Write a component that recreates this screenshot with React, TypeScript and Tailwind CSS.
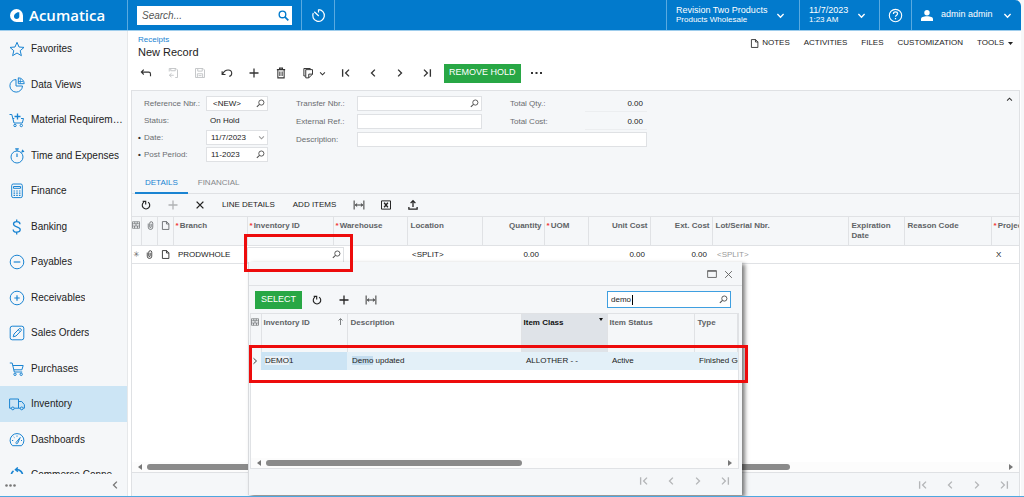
import * as React from "react";

type IconProps = { className?: string; children?: React.ReactNode };

const Icon = ({ className = "size-4", children }: IconProps) => (
    <svg
        className={`shrink-0 ${className}`}
        viewBox="0 0 16 16"
        fill="none"
        stroke="currentColor"
        strokeWidth="1"
        aria-hidden="true"
    >
        {children}
    </svg>
);

const Lens = ({ className = "size-[9px] text-[#4c4c4c]" }: IconProps) => (
    <Icon className={className}>
        <circle cx="9.5" cy="6.3" r="4.6" strokeWidth="1.6" />
        <path d="M6.2 9.6 1.5 14" strokeWidth="1.8" />
    </Icon>
);

const Chevron = ({ className = "size-3" }: IconProps) => (
    <Icon className={className}>
        <path d="M2.5 5.5 8 11l5.5-5.5" strokeWidth="2.4" />
    </Icon>
);

const Refresh = () => (
    <Icon className="size-3">
        <path d="M5.2 4.2a5 5 0 1 0 5.6 0" strokeWidth="1.5" />
        <path d="M3.6 3.2h4v4" strokeWidth="1.5" />
    </Icon>
);

const Plus = () => (
    <Icon className="size-3">
        <path d="M8 2v12M2 8h12" strokeWidth="1.7" />
    </Icon>
);

const FitWidth = () => (
    <Icon className="size-3">
        <path d="M1.5 2v12M14.5 2v12M3 8h10" strokeWidth="1.2" />
        <path d="M5.5 6 3.2 8l2.3 2M10.5 6l2.3 2-2.3 2" strokeWidth="1.2" />
    </Icon>
);

const First = () => (
    <Icon className="size-3">
        <path d="M3.5 3v10M12 3.5 7.5 8l4.5 4.5" strokeWidth="1.8" />
    </Icon>
);

const Prev = () => (
    <Icon className="size-3">
        <path d="M10.5 3.5 6 8l4.5 4.5" strokeWidth="1.8" />
    </Icon>
);

const Next = () => (
    <Icon className="size-3">
        <path d="M5.5 3.5 10 8l-4.5 4.5" strokeWidth="1.8" />
    </Icon>
);

const Last = () => (
    <Icon className="size-3">
        <path d="M12.5 3v10M4 3.5 8.5 8 4 12.5" strokeWidth="1.8" />
    </Icon>
);

const Clip = ({ className = "size-[9px]" }: IconProps) => (
    <Icon className={className}>
        <path d="M4 4.5v6.5a4 4 0 0 0 8 0V4a2.7 2.7 0 0 0-5.4 0v6.5a1.3 1.3 0 0 0 2.6 0V5" strokeWidth="1.4" />
    </Icon>
);

const Page = ({ className = "size-[9px]" }: IconProps) => (
    <Icon className={className}>
        <path d="M2.5 1h7.5l4 4v10H2.5zM9.7 1v4.3H14" strokeWidth="1.5" />
    </Icon>
);

const GridMark = () => (
    <Icon className="size-2">
        <path d="M1 1.5h14v13H1zM1 5.5h14M1 10h14M5.5 1.5v4M10.5 1.5v4M8 5.5V10M5 10v4.5M11 10v4.5" strokeWidth="1.3" />
    </Icon>
);

const menu = [
    { name: "Favorites", icon: <path d="m8 1.3 2 4.7 5 .4-3.8 3.3 1.2 5L8 12l-4.4 2.7 1.2-5L1 6.4 6 6z" /> },
    {
        name: "Data Views",
        icon: (
            <>
                <path d="M7 2.5A6.3 6.3 0 1 0 13.5 9H7z" />
                <path d="M9.3.8v5.9h5.9A6 6 0 0 0 9.3.8z" />
                <path d="M11.3 1.5v5M9.3 4.5h5" strokeWidth=".8" />
            </>
        ),
    },
    {
        name: "Material Requirements Planning",
        icon: (
            <>
                <path d="M.5 2.5h2.3L5 11h8.3M3.8 6.5h1.5M12 6.5h2.5L13.3 11" />
                <path d="M8.5 1.5v6M5.5 4.5h6" strokeWidth="1.3" />
                <circle cx="6" cy="13.5" r="1.2" />
                <circle cx="12.3" cy="13.5" r="1.2" />
            </>
        ),
    },
    {
        name: "Time and Expenses",
        icon: (
            <>
                <circle cx="8" cy="9" r="6" />
                <path d="M8 5.5V9M6.2.9h3.6M8 1v2M12.5 4.5 14 2.9M13 1.9l2 2" strokeWidth="1.2" />
            </>
        ),
    },
    {
        name: "Finance",
        icon: (
            <>
                <rect x="2.7" y="1" width="10.6" height="13.6" rx="1.5" />
                <path d="M4.5 3.5h7v1.8h-7z" />
                <path d="M4.5 8h1.6M7.2 8h1.6M9.9 8h1.6M4.5 10.2h1.6M7.2 10.2h1.6M9.9 10.2h1.6M4.5 12.4h1.6M7.2 12.4h1.6M9.9 12.4h1.6" strokeWidth="1.2" />
            </>
        ),
    },
    {
        name: "Banking",
        icon: (
            <path d="M11 5.2C11 3.6 9.6 2.7 7.7 2.7S4.5 3.7 4.5 5.1c0 3.5 6.7 1.9 6.7 5.5 0 1.5-1.5 2.6-3.5 2.6s-3.5-1-3.5-2.7M7.7.6v2.2M7.7 13.2v2.3" strokeWidth="1.3" />
        ),
    },
    {
        name: "Payables",
        icon: (
            <>
                <circle cx="8" cy="8" r="6.8" />
                <path d="M4.7 8h6.6" strokeWidth="1.2" />
            </>
        ),
    },
    {
        name: "Receivables",
        icon: (
            <>
                <circle cx="8" cy="8" r="6.8" />
                <path d="M5.3 8h5.4M8 5.3v5.4" strokeWidth="1.2" />
            </>
        ),
    },
    {
        name: "Sales Orders",
        icon: (
            <>
                <rect x="1.2" y="1.2" width="13.6" height="13.6" rx="2" />
                <path d="m4.2 11.8.8-2.8 5.3-5.3c.9-.9 2.7.9 1.9 1.9L7 11zM9.3 4.8l1.9 1.9" />
            </>
        ),
    },
    {
        name: "Purchases",
        icon: (
            <>
                <path d="M.8 2h2.4l2.1 9h7.9M3.9 4.5h10.3l-1.3 4.3h-8" />
                <circle cx="6" cy="13.3" r="1.2" />
                <circle cx="12.2" cy="13.3" r="1.2" />
            </>
        ),
    },
    {
        name: "Inventory",
        active: true,
        icon: (
            <>
                <path d="M2.3 12.2H.6V3h8.9v9.2H5.3M9.5 5.5h3.2l2.7 3.2v3.5h-1.3M9.5 12.2h1.7" />
                <circle cx="3.8" cy="12.4" r="1.4" />
                <circle cx="12.7" cy="12.4" r="1.4" />
            </>
        ),
    },
    {
        name: "Dashboards",
        icon: (
            <>
                <path d="M3.5 13.7a6.9 6.9 0 1 1 9 0z" />
                <path d="M3 8.5h1.2M4.7 4.9l.8.8M8 3.5v1.2M12 8.5h1" />
                <path d="m7 10.5 4.2-5-2.6 5.8c-.7 1-2 .2-1.6-.8z" />
            </>
        ),
    },
    {
        name: "Commerce Connections",
        icon: (
            <>
                <path d="M4.5 3.8A6 6 0 0 0 2.5 10M7 2.5a6 6 0 0 1 6.5 7" strokeWidth="1.6" />
                <path d="M8.8.5 6.5 2.7l2.5 2" strokeWidth="1.5" />
            </>
        ),
    },
];

const ToolButton = ({
    label,
    className = "w-[27px]",
    children,
}: IconProps & { label: string }) => (
    <button
        type="button"
        aria-label={label}
        className={`flex h-5 shrink-0 items-center justify-center ${className}`}
    >
        {children}
    </button>
);

const Pager = () => (
    <div className="flex text-[#b4b6b8]">
        <ToolButton label="First page"><First /></ToolButton>
        <ToolButton label="Previous page"><Prev /></ToolButton>
        <ToolButton label="Next page"><Next /></ToolButton>
        <ToolButton label="Last page"><Last /></ToolButton>
    </div>
);

const ScrollBar = ({ thumb }: { thumb: string }) => (
    <div className="flex h-[10px] shrink-0 items-center gap-[5px] bg-[#fcfcfc] px-[6px] text-[#777]">
        <svg className="h-[6px] w-1 shrink-0" viewBox="0 0 4 6" fill="currentColor">
            <path d="M4 0v6L0 3z" />
        </svg>
        <div className="flex-1">
            <div className={`h-[6px] rounded-full bg-[#8a8a8a] ${thumb}`} />
        </div>
        <svg className="h-[6px] w-1 shrink-0" viewBox="0 0 4 6" fill="currentColor">
            <path d="M0 0v6l4-3z" />
        </svg>
    </div>
);

const Header = () => (
    <header className="mr-[3px] flex h-[31px] shrink-0 rounded-tr-md border-b border-[#9fcdec] bg-[#027acc] text-white">
        <div className="flex w-32 shrink-0 items-center gap-[6px] border-r border-[#5aaae0] pl-[10px]">
            <svg className="size-[13px]" viewBox="0 0 13 13" fill="white" fillRule="evenodd">
                <path d="M6.5 0A6.5 6.5 0 0 1 13 6.5V13H6.5a6.5 6.5 0 0 1 0-13zM7.5 3.2C5 4.3 3.8 6 4 7.8 4.200 9.200 5.400 10 6.700 10 8.300 10 9.300 9 9.300 7.500V3.300z" />
            </svg>
            <span className="font-['Open_Sans',sans-serif] text-[15px] leading-5 font-semibold">
                Acumatica
            </span>
        </div>
        <div className="flex w-[174px] items-center border-r border-[#5aaae0] px-[9px]">
            <label className="flex h-[19px] w-full items-center bg-white pr-[3px]">
                <input
                    aria-label="Search"
                    placeholder="Search..."
                    className="min-w-0 flex-1 px-[5px] text-[10px] text-black italic outline-none placeholder:text-[#555]"
                />
                <Icon className="size-[11px] text-[#027acc]">
                    <circle cx="6.5" cy="6.5" r="4.8" strokeWidth="2" />
                    <path d="m10 10 5 5" strokeWidth="2.5" />
                </Icon>
            </label>
        </div>
        <button type="button" aria-label="Business date" className="flex w-[33px] items-center justify-center border-r border-[#5aaae0]">
            <Icon className="size-[15px]">
                <path d="M8 1.8a6.2 6.2 0 1 1-5.6 3.6M8 1.5v3.2M3.5 4l4.8 4.5" strokeWidth="1.3" />
            </Icon>
        </button>
        <div className="flex-1" />
        <button type="button" className="flex w-[133px] items-center justify-between border-l border-[#5aaae0] pr-[14px] pl-[9px] text-left">
            <span className="text-[9px] leading-[10px]">
                Revision Two Products
                <span className="block text-[8px]">Products Wholesale</span>
            </span>
            <Chevron className="size-[9px]" />
        </button>
        <button type="button" className="flex w-20 items-center justify-between border-l border-[#5aaae0] pr-[13px] pl-[9px] text-left">
            <span className="text-[9px] leading-[10px]">
                11/7/2023
                <span className="block text-[8px]">1:23 AM</span>
            </span>
            <Chevron className="size-[9px]" />
        </button>
        <button type="button" aria-label="Help" className="flex w-8 items-center justify-center border-l border-[#5aaae0]">
            <Icon className="size-[15px]">
                <circle cx="8" cy="8" r="6.6" strokeWidth="1.2" />
                <path d="M5.8 6.3C5.8 5 6.7 4.2 8 4.2s2.2.8 2.2 2c0 1.5-2.2 1.6-2.2 3.2M8 10.7v1.4" strokeWidth="1.3" />
            </Icon>
        </button>
        <button type="button" className="flex w-[110px] items-center border-l border-[#5aaae0] px-[9px] text-[9px]">
            <svg className="mr-2 h-[11px] w-3" viewBox="0 0 12 11" fill="currentColor">
                <circle cx="6" cy="2.7" r="2.7" />
                <path d="M0 11V9c0-1.8 2.5-2.8 6-2.8s6 1 6 2.8v2z" />
            </svg>
            <span className="flex-1 text-left">admin admin</span>
            <Chevron className="size-[9px]" />
        </button>
    </header>
);

const Sidebar = () => (
    <nav className="flex w-32 shrink-0 flex-col border-r border-[#e6e8ea] bg-[#f5f7f9]">
        <ul className="min-h-0 flex-1 overflow-hidden">
            {menu.map((item) => (
                <li key={item.name} className="odd:h-9 even:h-[35px]">
                    <a
                        href="#"
                        className={`flex h-full items-center gap-[6px] pr-[2px] pl-[9px] text-[10px] leading-4 text-[#222] ${
                            item.active ? "bg-[#cce5f5]" : ""
                        }`}
                    >
                        <Icon className="size-4 text-[#1a84d2]">{item.icon}</Icon>
                        <span className="truncate">{item.name}</span>
                    </a>
                </li>
            ))}
        </ul>
        <div className="flex h-[22px] shrink-0 items-center justify-between pr-[6px] pl-[5px] text-[#777]">
            <button type="button" aria-label="More">
                <svg className="h-[3px] w-[11px]" viewBox="0 0 11 3" fill="currentColor">
                    <circle cx="1.5" cy="1.5" r="1.3" />
                    <circle cx="5.5" cy="1.5" r="1.3" />
                    <circle cx="9.5" cy="1.5" r="1.3" />
                </svg>
            </button>
            <button type="button" aria-label="Collapse menu"><Prev /></button>
        </div>
    </nav>
);

const MainToolbar = () => (
    <div className="mt-1 flex h-5 items-center pl-px text-[#333]">
        <ToolButton label="Back">
            <Icon className="size-3">
                <path d="M5 3.5 1.8 6.8 5 10M2 6.8h9.5q2.5 0 2.5 2.5v3" strokeWidth="1.5" />
            </Icon>
        </ToolButton>
        <ToolButton label="Save and close">
            <Icon className="size-3 text-[#c4c6c8]">
                <path d="M3 6V2h9l2 2v10h-3M5 2v3h6V2M6 8.5 3 11l3 2.5M3.5 11H9" strokeWidth="1.3" />
            </Icon>
        </ToolButton>
        <ToolButton label="Save">
            <Icon className="size-3 text-[#c4c6c8]">
                <path d="M2 2h10l2 2v10H2zM5 2v3.5h6V2M4.5 14V9h7v5M6 11.5h4" strokeWidth="1.3" />
            </Icon>
        </ToolButton>
        <ToolButton label="Undo">
            <Icon className="size-3">
                <path d="M1.5 5.5V10H6M2 9.500C4 5.500 7 4 9.500 4c3 0 4.800 2 4.800 4.300 0 2-1.300 3.700-3.300 4.200" strokeWidth="1.5" />
            </Icon>
        </ToolButton>
        <ToolButton label="Add"><Plus /></ToolButton>
        <ToolButton label="Delete">
            <Icon className="size-3">
                <path d="M2.5 3.5h11M6 3.5v-2h4v2M3.8 3.5v11h8.4v-11M6.5 6v6M9.5 6v6" strokeWidth="1.4" />
            </Icon>
        </ToolButton>
        <ToolButton label="Copy and paste" className="w-[38px] gap-[5px] pl-[2px]">
            <Icon className="size-3">
                <path d="M4.5 12h-2V2H11v1.500M9 14.500H5v-11h9v6zM9 14.500v-5h5" strokeWidth="1.3" />
            </Icon>
            <Chevron className="size-[7px]" />
        </ToolButton>
        <ToolButton label="First record"><First /></ToolButton>
        <ToolButton label="Previous record"><Prev /></ToolButton>
        <ToolButton label="Next record"><Next /></ToolButton>
        <ToolButton label="Last record"><Last /></ToolButton>
        <button type="button" className="ml-1 h-[19px] bg-[#28a745] px-[5px] text-[9px] text-white">
            REMOVE HOLD
        </button>
        <ToolButton label="More actions" className="w-8">
            <svg className="h-[2px] w-[11px]" viewBox="0 0 11 2" fill="currentColor">
                <path d="M0 0h2v2H0zM4.5 0h2v2h-2zM9 0h2v2H9z" />
            </svg>
        </ToolButton>
    </div>
);

const box = "flex h-[15px] items-center border border-[#dfe1e4] bg-white pr-[2px] pl-1";
const entry = "min-w-0 flex-1 bg-transparent text-[8px] leading-3 text-[#222] outline-none";

const Summary = () => (
    <form className="flex items-start pt-[5px] pr-[6px] pb-2 text-[8px] leading-[15px] text-[#6a6d70]">
        <div className="grid grid-cols-[12px_62px_62px] gap-y-[2px]">
            <label htmlFor="ref" className="col-start-2">Reference Nbr.:</label>
            <span className={box}>
                <input id="ref" defaultValue="<NEW>" className={`${entry} pl-[2px]`} />
                <Lens />
            </span>
            <span className="col-start-2">Status:</span>
            <span className="pl-1 text-[#222]">On Hold</span>
            <span className="pl-[6px] font-bold text-[#333]">•</span>
            <label htmlFor="date">Date:</label>
            <span className={box}>
                <input id="date" defaultValue="11/7/2023" className={entry} />
                <Chevron className="size-[7px] text-[#999]" />
            </span>
            <span className="pl-[6px] font-bold text-[#333]">•</span>
            <label htmlFor="period">Post Period:</label>
            <span className={box}>
                <input id="period" defaultValue="11-2023" className={entry} />
                <Lens />
            </span>
        </div>
        <div className="ml-7 grid grid-cols-[61px_125px_28px_75px_62px] gap-y-[2px]">
            <label htmlFor="transfer">Transfer Nbr.:</label>
            <span className={box}>
                <input id="transfer" className={entry} />
                <Lens />
            </span>
            <span className="col-start-4">Total Qty.:</span>
            <span className="border-b border-[#eceef0] pr-1 text-right text-[#222]">0.00</span>
            <label htmlFor="external">External Ref.:</label>
            <span className={box}>
                <input id="external" className={entry} />
            </span>
            <span className="col-start-4">Total Cost:</span>
            <span className="border-b border-[#eceef0] pr-1 text-right text-[#222]">0.00</span>
            <label htmlFor="description">Description:</label>
            <span className={`col-span-4 ${box}`}>
                <input id="description" className={entry} />
            </span>
        </div>
        <button type="button" aria-label="Collapse summary" className="ml-auto rotate-180">
            <Chevron className="size-[7px] text-[#333]" />
        </button>
    </form>
);

const GridToolbar = () => (
    <div className="flex h-[22px] shrink-0 items-center text-[8px] text-[#222]">
        <ToolButton label="Refresh"><Refresh /></ToolButton>
        <ToolButton label="Add row" className="w-[27px] text-[#b0b2b4]"><Plus /></ToolButton>
        <ToolButton label="Delete row">
            <Icon className="size-3">
                <path d="m3.5 3.5 9 9M12.5 3.5l-9 9" strokeWidth="1.8" />
            </Icon>
        </ToolButton>
        <button type="button" className="px-[9px]">LINE DETAILS</button>
        <button type="button" className="px-[9px]">ADD ITEMS</button>
        <ToolButton label="Fit to screen"><FitWidth /></ToolButton>
        <ToolButton label="Export to Excel">
            <Icon className="size-3">
                <path d="M2 2.5h12v11H2z" strokeWidth="1.3" />
                <path d="m5.5 5 5 6M10.5 5l-5 6" strokeWidth="1.8" />
            </Icon>
        </ToolButton>
        <ToolButton label="Load records">
            <Icon className="size-3">
                <path d="M8 10.500v-8M4.800 5.500 8 2.200l3.200 3.300M2.500 10.500v3h11v-3" strokeWidth="1.7" />
            </Icon>
        </ToolButton>
    </div>
);

const columns = [
    { name: "Branch", width: "w-[74px]", required: true, value: "PRODWHOLE" },
    { name: "Inventory ID", width: "w-[86px]", required: true, value: "" },
    { name: "Warehouse", width: "w-[74px]", required: true, value: "" },
    { name: "Location", width: "w-[75px]", value: "<SPLIT>" },
    { name: "Quantity", width: "w-[62px]", right: true, value: "0.00" },
    { name: "UOM", width: "w-[44px]", required: true, value: "" },
    { name: "Unit Cost", width: "w-[62px]", right: true, value: "0.00" },
    { name: "Ext. Cost", width: "w-[62px]", right: true, value: "0.00" },
    { name: "Lot/Serial Nbr.", width: "w-[136px]", muted: true, value: "<SPLIT>" },
    { name: "Expiration Date", width: "w-[56px]", value: "" },
    { name: "Reason Code", width: "w-[87px]", value: "" },
    { name: "Project", width: "", required: true, value: "X" },
];

const DetailsGrid = () => (
    <table className="w-full table-fixed border-collapse text-[8px]">
        <thead>
            <tr className="h-[29px] border-y border-[#e0e2e5] bg-[#f5f7f9] align-top leading-[10px] text-[#606366]">
                <th className="w-[9px] border-r border-[#e0e2e5] pt-1"><GridMark /></th>
                <th className="w-4 border-r border-[#e0e2e5] pt-1 pl-1"><Clip /></th>
                <th className="w-4 border-r border-[#e0e2e5] pt-1 pl-[3px]"><Page /></th>
                {columns.map((c) => (
                    <th
                        key={c.name}
                        className={`overflow-hidden border-r border-[#e0e2e5] pt-1 font-bold last:border-r-0 ${c.width} ${
                            c.right ? "pr-[2px] text-right" : "text-left"
                        } ${c.required ? "pl-[2px] whitespace-nowrap" : "pl-[3px]"}`}
                    >
                        {c.required && <span className="mr-px text-[#f03434]">*</span>}
                        {c.name}
                    </th>
                ))}
            </tr>
        </thead>
        <tbody>
            <tr className="h-[18px] border-b border-[#e0e2e5] bg-white text-[#222]">
                <td className="text-center text-[#666]">✳</td>
                <td className="pl-1"><Clip /></td>
                <td className="pl-1"><Page /></td>
                {columns.map((c) =>
                    c.name === "Inventory ID" ? (
                        <td key={c.name}>
                            {/* the cell editor is wider than its column */}
                            <span className="flex h-4 w-[97px] items-center border border-[#dfe1e4] bg-white pr-[2px]">
                                <input aria-label="Inventory ID" className={entry} />
                                <Lens />
                            </span>
                        </td>
                    ) : (
                        <td
                            key={c.name}
                            className={`whitespace-nowrap ${c.right ? "pr-[5px] text-right" : "pl-[5px]"} ${
                                c.muted ? "text-[#999]" : ""
                            }`}
                        >
                            {c.value}
                        </td>
                    )
                )}
            </tr>
        </tbody>
    </table>
);

const Lookup = () => (
    <div
        role="dialog"
        aria-label="Select inventory item"
        className="absolute top-[262px] left-[248px] flex h-[233px] w-[494px] flex-col border-l border-[#d8dadd] bg-[#f5f7f9] shadow-[3px_2px_4px_rgba(0,0,0,0.5)]"
    >
        <div className="flex h-6 shrink-0 items-center justify-end gap-[7px] border-b border-[#e0e2e5] pt-px pr-[9px] text-[#666]">
            <button type="button" aria-label="Maximize">
                <Icon className="size-[10px]">
                    <path d="M1 2.5h14v11H1zM1 3.700h14" strokeWidth="1.5" />
                </Icon>
            </button>
            <button type="button" aria-label="Close">
                <Icon className="size-[9px]">
                    <path d="m2 2 12 12M14 2 2 14" strokeWidth="1.7" />
                </Icon>
            </button>
        </div>
        <div className="flex h-[27px] shrink-0 items-center pr-[11px] pl-[6px] text-[#222]">
            <button type="button" className="mr-px h-[18px] bg-[#28a745] px-[6px] text-[9px] text-white">
                SELECT
            </button>
            <ToolButton label="Refresh"><Refresh /></ToolButton>
            <ToolButton label="Add"><Plus /></ToolButton>
            <ToolButton label="Fit to screen"><FitWidth /></ToolButton>
            <label className="relative ml-auto flex h-[17px] w-[124px] items-center border border-[#3f9fe0] bg-white px-[2px]">
                <input aria-label="Search items" defaultValue="demo" className={`${entry} pl-px`} />
                <span className="absolute top-[3px] left-6 h-[10px] w-px bg-black" />
                <Lens />
            </label>
        </div>
        <div className="mr-[3px] ml-px flex min-h-0 flex-1 flex-col border border-[#e0e2e5] bg-white">
            <table className="w-full table-fixed border-collapse text-left text-[8px]">
                <thead>
                    <tr className="h-[38px] bg-[#f5f7f9] align-top leading-[10px] text-[#606366] *:border-r *:border-[#e0e2e5] *:pt-1">
                        <th className="w-[10px]"><GridMark /></th>
                        <th className="w-[86px] pl-[2px]">
                            <span className="flex justify-between pr-1">
                                Inventory ID
                                <svg className="h-[7px] w-[5px]" viewBox="0 0 5 7" fill="none" stroke="currentColor">
                                    <path d="M2.5 7V1M.5 2.500l2-2 2 2" strokeWidth=".8" />
                                </svg>
                            </span>
                        </th>
                        <th className="w-[174px] pl-[3px]">Description</th>
                        <th className="w-[86px] bg-[#dfe3e8] pl-[2px] text-[#111]">
                            <span className="flex justify-between pr-1">
                                Item Class
                                <svg className="h-[3px] w-1" viewBox="0 0 4 3" fill="currentColor">
                                    <path d="M0 0h4L2 3z" />
                                </svg>
                            </span>
                        </th>
                        <th className="w-[87px] pl-[2px]">Item Status</th>
                        <th className="pl-[3px]">Type</th>
                    </tr>
                </thead>
                <tbody>
                    <tr className="h-[18px] bg-[#e3f0f8] whitespace-nowrap text-[#222]">
                        <td className="bg-[#f5f7f9]">
                            <Icon className="size-2">
                                <path d="m5 2.500 6 5.500-6 5.500" strokeWidth="1.7" />
                            </Icon>
                        </td>
                        <td className="bg-[#cce4f4] pl-1">
                            <span className="bg-[#e9f1f7]">DEMO</span>1
                        </td>
                        <td className="pl-[5px]">
                            <span className="bg-[#c3dcee]">Demo</span> updated
                        </td>
                        <td className="pl-[5px]">ALLOTHER - -</td>
                        <td className="pl-[5px]">Active</td>
                        <td className="overflow-hidden pl-[5px]">Finished Good</td>
                    </tr>
                </tbody>
            </table>
            <div className="flex-1" />
            <ScrollBar thumb="w-[56%]" />
        </div>
        <div className="flex h-[26px] shrink-0 items-center justify-end pr-1 pb-[3px]">
            <Pager />
        </div>
    </div>
);

const App = () => (
    <div className="relative flex h-screen flex-col overflow-hidden border-b border-[#4ea7e0] bg-[#f7f7f8] font-['Liberation_Sans',Arial,sans-serif]">
        <Header />
        <div className="mr-[3px] flex min-h-0 flex-1">
            <Sidebar />
            <main className="flex min-w-0 flex-1 flex-col bg-white pr-px pl-[3px]">
                <div className="flex justify-between pt-1">
                    <div className="pl-[7px]">
                        <a href="#" className="block text-[8px] leading-[10px] text-[#1a84d2]">Receipts</a>
                        <h1 className="text-[11px] leading-[14px] text-[#222]">New Record</h1>
                    </div>
                    <div className="flex h-4 items-center gap-[14px] pr-[7px] text-[8px] text-[#222]">
                        <button type="button" className="flex items-center gap-[3px]">
                            <Page />
                            NOTES
                        </button>
                        <button type="button">ACTIVITIES</button>
                        <button type="button">FILES</button>
                        <button type="button">CUSTOMIZATION</button>
                        <button type="button" className="flex items-center gap-1">
                            TOOLS
                            <svg className="h-[3px] w-[5px]" viewBox="0 0 5 3" fill="currentColor">
                                <path d="M0 0h5L2.5 3z" />
                            </svg>
                        </button>
                    </div>
                </div>
                <MainToolbar />
                <section className="mt-[7px] flex min-h-0 flex-1 flex-col border border-b-0 border-[#dfe1e4] bg-[#f5f7f9]">
                    <Summary />
                    <div role="tablist" className="flex h-6 shrink-0 border-b border-[#dfe1e4] pl-[3px] text-[8px]">
                        <button type="button" role="tab" aria-selected="true" className="-mb-px border-b-2 border-[#1a84d2] px-[10px] pt-[3px] text-[#1a84d2]">
                            DETAILS
                        </button>
                        <button type="button" role="tab" aria-selected="false" className="-mb-px border-b-2 border-transparent px-[10px] pt-[3px] text-[#85888b]">
                            FINANCIAL
                        </button>
                    </div>
                    <GridToolbar />
                    <div className="flex min-h-0 flex-1 flex-col overflow-hidden border-b border-[#dfe1e4] bg-white">
                        <DetailsGrid />
                        <div className="flex-1" />
                        <ScrollBar thumb="w-3/4" />
                    </div>
                    <div className="flex h-[23px] shrink-0 items-center justify-end pr-[2px]">
                        <Pager />
                    </div>
                </section>
            </main>
        </div>
        <Lookup />
        <div className="pointer-events-none absolute top-[234px] left-[244px] h-[38px] w-[109px] border-3 border-[#ed0c0c]" />
        <div className="pointer-events-none absolute top-[345px] left-[249px] h-[38px] w-[499px] border-3 border-[#ed0c0c]" />
    </div>
);

export default App;
